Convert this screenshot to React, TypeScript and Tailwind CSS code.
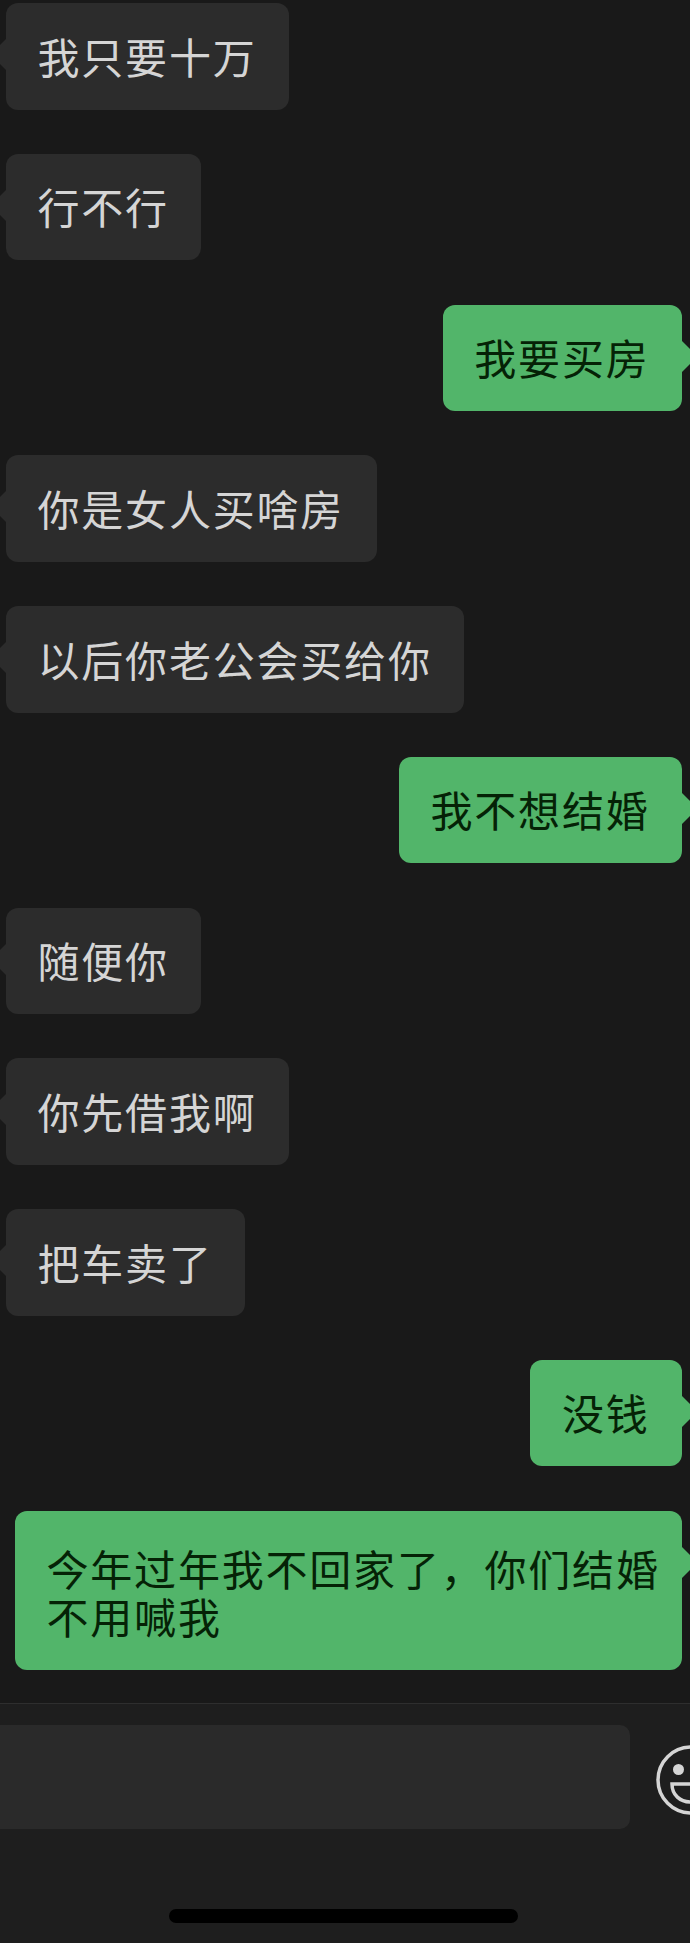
import clsx from 'clsx'

type Message = {
  id: number
  mine: boolean
  text: string
  long?: boolean
}

const messages: Message[] = [
  { id: 1, mine: false, text: '我只要十万' },
  { id: 2, mine: false, text: '行不行' },
  { id: 3, mine: true, text: '我要买房' },
  { id: 4, mine: false, text: '你是女人买啥房' },
  { id: 5, mine: false, text: '以后你老公会买给你' },
  { id: 6, mine: true, text: '我不想结婚' },
  { id: 7, mine: false, text: '随便你' },
  { id: 8, mine: false, text: '你先借我啊' },
  { id: 9, mine: false, text: '把车卖了' },
  { id: 10, mine: true, text: '没钱' },
  { id: 11, mine: true, text: '今年过年我不回家了，你们结婚不用喊我', long: true },
]

function Bubble({ message }: { message: Message }) {
  const { mine, text, long } = message

  return (
    <div className={clsx('flex', mine ? 'justify-end pr-2' : 'justify-start pl-1.5')}>
      <div
        className={clsx(
          'relative rounded-xl pl-[31.5px] text-[42px] leading-[48px] tracking-[1.8px]',
          long ? 'h-[159px] w-[667px] pt-[33.5px] pr-[18px]' : 'h-[106.5px] pt-[28.5px] pr-[32.5px] whitespace-nowrap',
          mine ? 'bg-[#52b56a] text-[#052206]' : 'bg-[#2c2c2c] text-[#d5d5d5]'
        )}
      >
        {/* Tail */}
        <svg
          className={clsx('absolute top-[36px] h-8 w-3', mine ? 'left-full' : 'right-full -scale-x-100')}
          viewBox="0 0 12 32"
          fill={mine ? '#52b56a' : '#2c2c2c'}
        >
          <path d="M0 0L12 12Q15 15.5 12 19L0 31Z" />
        </svg>
        <p>{text}</p>
      </div>
    </div>
  )
}

export default function App() {
  return (
    <div
      lang="zh-CN"
      className="flex h-[1943px] w-[690px] flex-col overflow-hidden bg-[#191919] font-['Noto_Sans_CJK_SC',sans-serif]"
    >
      {/* Messages */}
      <main className="flex h-[1703px] flex-col gap-[44.25px] pt-[3px]">
        {messages.map((message) => (
          <Bubble key={message.id} message={message} />
        ))}
      </main>

      {/* Input bar */}
      <footer className="flex flex-1 flex-col border-t border-[#2e2e2e] bg-[#1e1e1e]">
        <div className="mt-[21px] flex items-center">
          <div className="h-[104px] w-[630px] shrink-0 rounded-r-[10px] bg-[#2a2a2a]" />
          <svg className="mt-[5px] ml-[26px] h-[70px] w-[70px] shrink-0" viewBox="0 0 70 70" fill="none">
            <circle cx="35" cy="35" r="33" stroke="#d5d5d5" strokeWidth="3.5" />
            <circle cx="22.5" cy="24.5" r="5.5" fill="#d5d5d5" />
            <circle cx="47.5" cy="24.5" r="5.5" fill="#d5d5d5" />
            <path d="M16 39H54C54 50 46 57 35 57S16 50 16 39Z" stroke="#d5d5d5" strokeWidth="3.5" />
          </svg>
        </div>
        <div className="mt-20 ml-[169px] h-3.5 w-[349px] rounded-full bg-black" />
      </footer>
    </div>
  )
}
